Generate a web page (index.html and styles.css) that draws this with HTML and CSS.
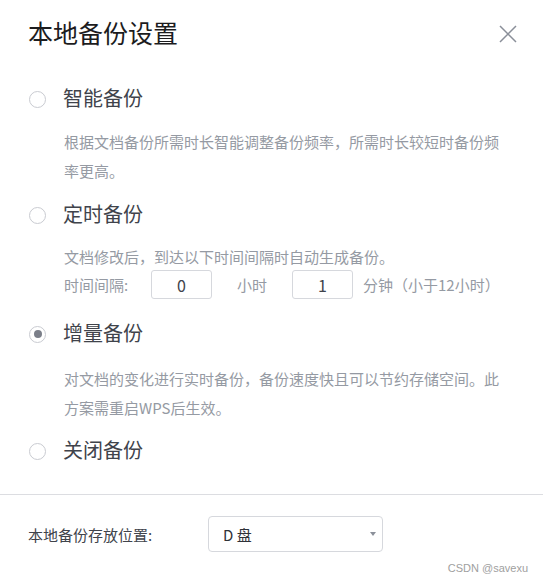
FILE: index.html
```html
<!DOCTYPE html>
<html lang="zh-CN">
<head>
<meta charset="utf-8">
<title>本地备份设置</title>
<link rel="stylesheet" href="styles.css">
</head>
<body>
<div class="dialog">
  <div class="header">
    <h1 class="title">本地备份设置</h1>
    <svg class="close" width="18" height="18" viewBox="0 0 18 18" aria-label="关闭">
      <path d="M1 1 L17 17 M17 1 L1 17" stroke="#8a8f99" stroke-width="1.5" fill="none"/>
    </svg>
  </div>
  <div class="options">
    <div class="option opt-1">
      <span class="radio"></span>
      <span class="label">智能备份</span>
    </div>
    <p class="desc desc-1">根据文档备份所需时长智能调整备份频率，所需时长较短时备份频率更高。</p>

    <div class="option opt-2">
      <span class="radio"></span>
      <span class="label">定时备份</span>
    </div>
    <p class="desc desc-2">文档修改后，到达以下时间间隔时自动生成备份。</p>
    <div class="interval">
      <span class="int-label">时间间隔:</span>
      <span class="num">0</span>
      <span class="unit">小时</span>
      <span class="num">1</span>
      <span class="unit-min">分钟（小于12小时）</span>
    </div>

    <div class="option opt-3">
      <span class="radio checked"></span>
      <span class="label">增量备份</span>
    </div>
    <p class="desc desc-3">对文档的变化进行实时备份，备份速度快且可以节约存储空间。此方案需重启WPS后生效。</p>

    <div class="option opt-4">
      <span class="radio"></span>
      <span class="label">关闭备份</span>
    </div>
  </div>
  <div class="footer">
    <span class="foot-label">本地备份存放位置:</span>
    <div class="select">
      <span class="sel-value">D 盘</span>
      <span class="caret"></span>
    </div>
  </div>
  <div class="watermark">CSDN @savexu</div>
</div>
</body>
</html>
```
FILE: styles.css
```css
* { box-sizing: border-box; }
html, body {
  margin: 0;
  padding: 0;
  background: #ffffff;
}
body {
  font-family: "Noto Sans CJK SC", "Liberation Sans", sans-serif;
  color: #3b3e46;
}
.dialog {
  position: relative;
  width: 543px;
  height: 582px;
  overflow: hidden;
}
.header {
  height: 68px;
  display: flex;
  align-items: center;
  justify-content: space-between;
  padding: 0 26px 0 28px;
}
.title {
  margin: 0;
  font-size: 25px;
  line-height: 34px;
  font-weight: normal;
  color: #1c1c1e;
  position: relative;
  top: -2px;
}
.close { display: block; }

.options {
  padding: 0 0 28px 29px;
}
.option {
  display: flex;
  align-items: center;
  height: 30px;
}
.opt-1 { margin-top: 16px; }
.opt-2 { margin-top: 15px; }
.opt-3 { margin-top: 20px; }
.opt-4 { margin-top: 14px; }

.radio {
  width: 17px;
  height: 17px;
  border: 1px solid #c9cbd1;
  border-radius: 50%;
  display: flex;
  align-items: center;
  justify-content: center;
  flex: none;
}
.radio.checked::after {
  content: "";
  width: 8px;
  height: 8px;
  border-radius: 50%;
  background: #7b7f89;
}
.label {
  margin-left: 17px;
  font-size: 20px;
  line-height: 30px;
  color: #40434b;
  position: relative;
  top: -1px;
}
.desc {
  margin: 0;
  padding-left: 35px;
  width: 470px;
  font-size: 15px;
  line-height: 29px;
  color: #959aa3;
}
.desc-1 { margin-top: 13px; }
.desc-2 { margin-top: 14px; line-height: 26px; }
.desc-3 { margin-top: 15px; }

.interval {
  display: flex;
  align-items: center;
  height: 29px;
  padding-left: 35px;
  font-size: 15px;
  color: #959aa3;
}
.int-label { width: 87px; }
.num {
  width: 61px;
  height: 29px;
  border: 1px solid #d6d8dd;
  border-radius: 3px;
  display: flex;
  align-items: center;
  justify-content: center;
  font-size: 16px;
  color: #40434b;
}
.unit {
  width: 80px;
  padding-left: 25px;
}
.unit-min { margin-left: 10px; }

.footer {
  border-top: 1px solid #dcdde1;
  padding: 21px 0 0 28px;
  display: flex;
  align-items: center;
}
.foot-label {
  width: 180px;
  font-size: 15px;
  color: #40434b;
}
.select {
  width: 175px;
  height: 36px;
  border: 1px solid #d6d8dd;
  border-radius: 4px;
  display: flex;
  align-items: center;
  justify-content: space-between;
  padding: 0 6px 0 14px;
}
.sel-value {
  font-size: 15px;
  color: #2f3238;
}
.caret {
  width: 0;
  height: 0;
  border-left: 3px solid transparent;
  border-right: 3px solid transparent;
  border-top: 4px solid #8b909a;
}
.watermark {
  position: absolute;
  right: 15px;
  bottom: 7px;
  font-family: "Liberation Sans", sans-serif;
  font-size: 11px;
  line-height: 13px;
  color: #a0a0a0;
}
```
